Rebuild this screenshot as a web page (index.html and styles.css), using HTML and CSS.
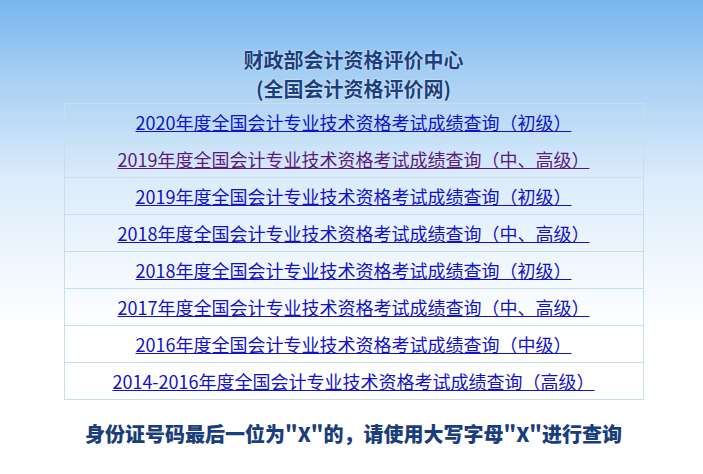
FILE: index.html
```html
<!DOCTYPE html>
<html lang="zh-CN">
<head>
<meta charset="utf-8">
<title>财政部会计资格评价中心</title>
<link rel="stylesheet" href="styles.css">
</head>
<body>
<div class="page">
  <div class="title">
    <div>财政部会计资格评价中心</div>
    <div>(全国会计资格评价网)</div>
  </div>
  <table class="list">
    <tr><td><a href="#a1" class="lnk">2020年度全国会计专业技术资格考试成绩查询（初级）</a></td></tr>
    <tr><td><a href="#a2" class="lnk visited">2019年度全国会计专业技术资格考试成绩查询（中、高级）</a></td></tr>
    <tr><td><a href="#a3" class="lnk">2019年度全国会计专业技术资格考试成绩查询（初级）</a></td></tr>
    <tr><td><a href="#a4" class="lnk">2018年度全国会计专业技术资格考试成绩查询（中、高级）</a></td></tr>
    <tr><td><a href="#a5" class="lnk">2018年度全国会计专业技术资格考试成绩查询（初级）</a></td></tr>
    <tr><td><a href="#a6" class="lnk">2017年度全国会计专业技术资格考试成绩查询（中、高级）</a></td></tr>
    <tr><td><a href="#a7" class="lnk">2016年度全国会计专业技术资格考试成绩查询（中级）</a></td></tr>
    <tr><td><a href="#a8" class="lnk">2014-2016年度全国会计专业技术资格考试成绩查询（高级）</a></td></tr>
  </table>
  <div class="notice">身份证号码最后一位为"X"的，请使用大写字母"X"进行查询</div>
</div>
</body>
</html>
```
FILE: styles.css
```css
html, body {
  margin: 0;
  padding: 0;
}
body {
  min-height: 474px;
  background: linear-gradient(to bottom, #78b6ee 0px, #a9d0f4 80px, #dcecfb 180px, #ffffff 330px, #ffffff 100%);
  font-family: "Noto Sans CJK SC", "Noto Sans", sans-serif;
}
.page {
  padding-left: 4px;
  padding-top: 45px;
  display: flex;
  flex-direction: column;
  align-items: center;
}
.title {
  text-align: center;
  font-size: 20px;
  font-weight: bold;
  line-height: 29px;
  color: #1b3f7e;
  text-shadow: 0 0 2px #ffffff;
}
.list {
  width: 580px;
  border-collapse: collapse;
  margin-top: 0px;
}
.list td {
  border: 1px solid #c6dfea;
  height: 36px;
  padding: 0;
  text-align: center;
  font-size: 18px;
  line-height: 24px;
}
.lnk {
  color: #1212c8;
  text-decoration: underline;
}
.lnk.visited {
  color: #5a1a7e;
}
.notice {
  margin-top: 19px;
  font-size: 20px;
  font-weight: 900;
  color: #1a3d7c;
  text-shadow: 0 0 2px #ffffff;
  line-height: 30px;
}
```
